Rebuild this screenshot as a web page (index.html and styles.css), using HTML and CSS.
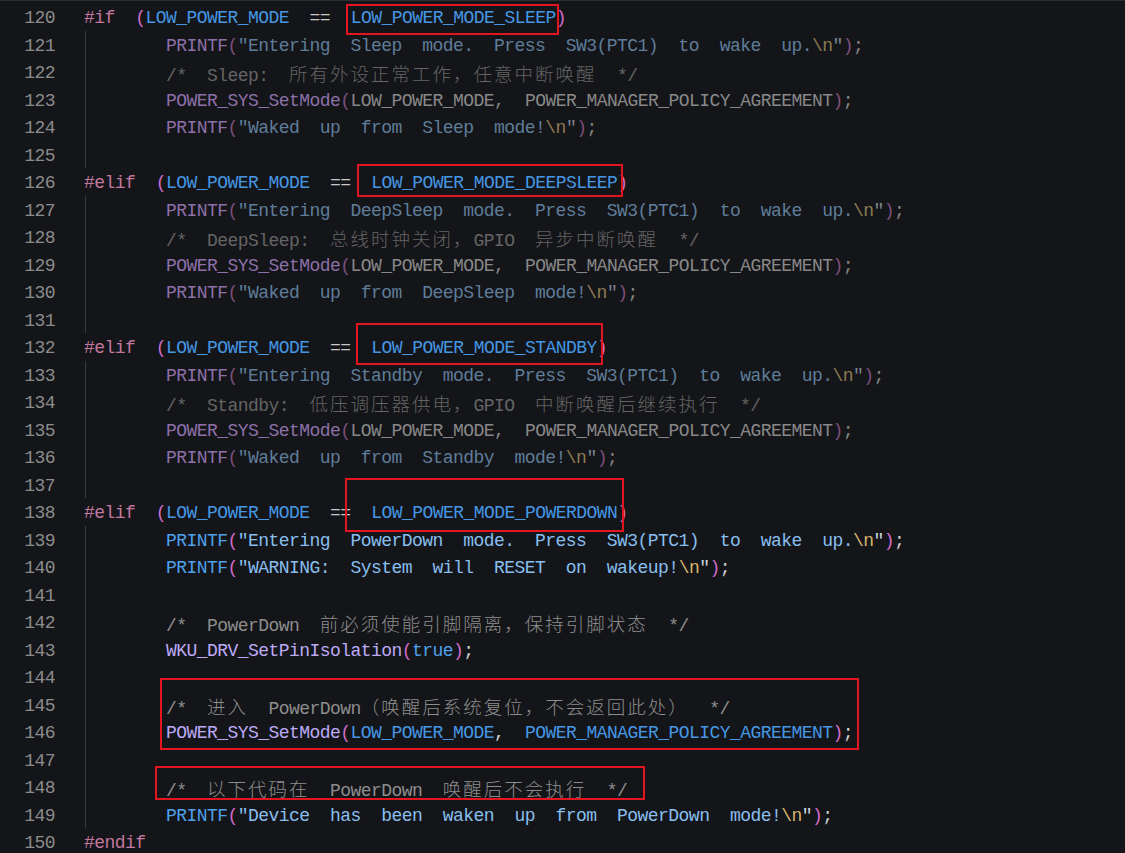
FILE: index.html
```html
<!DOCTYPE html>
<html lang="zh-CN">
<head>
<meta charset="utf-8">
<title>Code</title>
<link rel="stylesheet" href="styles.css">
</head>
<body>
<div class="editor">
<div class="ln"><span class="no">120</span><span class="code"><span class="k">#if</span>  <span class="p">(</span><span class="i">LOW_POWER_MODE</span>  <span class="o">==</span>  <span class="i">LOW_POWER_MODE_SLEEP</span><span class="p">)</span></span></div>
<div class="ln g dim"><span class="no">121</span><span class="code">        <span class="f">PRINTF</span><span class="p">(</span><span class="s">"Entering  Sleep  mode.  Press  SW3(PTC1)  to  wake  up.</span><span class="e">\n</span><span class="q">"</span><span class="p">)</span><span class="t">;</span></span></div>
<div class="ln g dim"><span class="no">122</span><span class="code">        <span class="c">/*  Sleep:  <span class="cj">所有外设正常工作，任意中断唤醒</span>  */</span></span></div>
<div class="ln g dim"><span class="no">123</span><span class="code">        <span class="f">POWER_SYS_SetMode</span><span class="p">(</span><span class="i">LOW_POWER_MODE</span><span class="t">,</span>  <span class="i">POWER_MANAGER_POLICY_AGREEMENT</span><span class="p">)</span><span class="t">;</span></span></div>
<div class="ln g dim"><span class="no">124</span><span class="code">        <span class="f">PRINTF</span><span class="p">(</span><span class="s">"Waked  up  from  Sleep  mode!</span><span class="e">\n</span><span class="q">"</span><span class="p">)</span><span class="t">;</span></span></div>
<div class="ln g"><span class="no">125</span><span class="code"> </span></div>
<div class="ln"><span class="no">126</span><span class="code"><span class="k">#elif</span>  <span class="p">(</span><span class="i">LOW_POWER_MODE</span>  <span class="o">==</span>  <span class="i">LOW_POWER_MODE_DEEPSLEEP</span><span class="p">)</span></span></div>
<div class="ln g dim"><span class="no">127</span><span class="code">        <span class="f">PRINTF</span><span class="p">(</span><span class="s">"Entering  DeepSleep  mode.  Press  SW3(PTC1)  to  wake  up.</span><span class="e">\n</span><span class="q">"</span><span class="p">)</span><span class="t">;</span></span></div>
<div class="ln g dim"><span class="no">128</span><span class="code">        <span class="c">/*  DeepSleep:  <span class="cj">总线时钟关闭，</span>GPIO  <span class="cj">异步中断唤醒</span>  */</span></span></div>
<div class="ln g dim"><span class="no">129</span><span class="code">        <span class="f">POWER_SYS_SetMode</span><span class="p">(</span><span class="i">LOW_POWER_MODE</span><span class="t">,</span>  <span class="i">POWER_MANAGER_POLICY_AGREEMENT</span><span class="p">)</span><span class="t">;</span></span></div>
<div class="ln g dim"><span class="no">130</span><span class="code">        <span class="f">PRINTF</span><span class="p">(</span><span class="s">"Waked  up  from  DeepSleep  mode!</span><span class="e">\n</span><span class="q">"</span><span class="p">)</span><span class="t">;</span></span></div>
<div class="ln g"><span class="no">131</span><span class="code"> </span></div>
<div class="ln"><span class="no">132</span><span class="code"><span class="k">#elif</span>  <span class="p">(</span><span class="i">LOW_POWER_MODE</span>  <span class="o">==</span>  <span class="i">LOW_POWER_MODE_STANDBY</span><span class="p">)</span></span></div>
<div class="ln g dim"><span class="no">133</span><span class="code">        <span class="f">PRINTF</span><span class="p">(</span><span class="s">"Entering  Standby  mode.  Press  SW3(PTC1)  to  wake  up.</span><span class="e">\n</span><span class="q">"</span><span class="p">)</span><span class="t">;</span></span></div>
<div class="ln g dim"><span class="no">134</span><span class="code">        <span class="c">/*  Standby:  <span class="cj">低压调压器供电，</span>GPIO  <span class="cj">中断唤醒后继续执行</span>  */</span></span></div>
<div class="ln g dim"><span class="no">135</span><span class="code">        <span class="f">POWER_SYS_SetMode</span><span class="p">(</span><span class="i">LOW_POWER_MODE</span><span class="t">,</span>  <span class="i">POWER_MANAGER_POLICY_AGREEMENT</span><span class="p">)</span><span class="t">;</span></span></div>
<div class="ln g dim"><span class="no">136</span><span class="code">        <span class="f">PRINTF</span><span class="p">(</span><span class="s">"Waked  up  from  Standby  mode!</span><span class="e">\n</span><span class="q">"</span><span class="p">)</span><span class="t">;</span></span></div>
<div class="ln g"><span class="no">137</span><span class="code"> </span></div>
<div class="ln"><span class="no">138</span><span class="code"><span class="k">#elif</span>  <span class="p">(</span><span class="i">LOW_POWER_MODE</span>  <span class="o">==</span>  <span class="i">LOW_POWER_MODE_POWERDOWN</span><span class="p">)</span></span></div>
<div class="ln g"><span class="no">139</span><span class="code">        <span class="m">PRINTF</span><span class="p">(</span><span class="s">"Entering  PowerDown  mode.  Press  SW3(PTC1)  to  wake  up.</span><span class="e">\n</span><span class="q">"</span><span class="p">)</span><span class="t">;</span></span></div>
<div class="ln g"><span class="no">140</span><span class="code">        <span class="m">PRINTF</span><span class="p">(</span><span class="s">"WARNING:  System  will  RESET  on  wakeup!</span><span class="e">\n</span><span class="q">"</span><span class="p">)</span><span class="t">;</span></span></div>
<div class="ln g"><span class="no">141</span><span class="code"> </span></div>
<div class="ln g"><span class="no">142</span><span class="code">        <span class="c">/*  PowerDown  <span class="cj">前必须使能引脚隔离，保持引脚状态</span>  */</span></span></div>
<div class="ln g"><span class="no">143</span><span class="code">        <span class="f">WKU_DRV_SetPinIsolation</span><span class="p">(</span><span class="m">true</span><span class="p">)</span><span class="t">;</span></span></div>
<div class="ln g"><span class="no">144</span><span class="code"> </span></div>
<div class="ln g"><span class="no">145</span><span class="code">        <span class="c">/*  <span class="cj">进入</span>  PowerDown<span class="cj">（唤醒后系统复位，不会返回此处）</span>  */</span></span></div>
<div class="ln g"><span class="no">146</span><span class="code">        <span class="f">POWER_SYS_SetMode</span><span class="p">(</span><span class="i">LOW_POWER_MODE</span><span class="t">,</span>  <span class="i">POWER_MANAGER_POLICY_AGREEMENT</span><span class="p">)</span><span class="t">;</span></span></div>
<div class="ln g"><span class="no">147</span><span class="code"> </span></div>
<div class="ln g"><span class="no">148</span><span class="code">        <span class="c">/*  <span class="cj">以下代码在</span>  PowerDown  <span class="cj">唤醒后不会执行</span>  */</span></span></div>
<div class="ln g"><span class="no">149</span><span class="code">        <span class="m">PRINTF</span><span class="p">(</span><span class="s">"Device  has  been  waken  up  from  PowerDown  mode!</span><span class="e">\n</span><span class="q">"</span><span class="p">)</span><span class="t">;</span></span></div>
<div class="ln"><span class="no">150</span><span class="code"><span class="k">#endif</span></span></div>

<div class="mark mark1"></div>
<div class="mark mark2"></div>
<div class="mark mark3"></div>
<div class="mark mark4"></div>
<div class="mark mark5"></div>
<div class="mark mark6"></div>
</div>
</body>
</html>
```

FILE: styles.css
```css
html, body {
  margin: 0;
  padding: 0;
  background: #141519;
}

.editor {
  position: relative;
  width: 1125px;
  height: 853px;
  box-sizing: border-box;
  border-top: 1px solid #2c2d31;
  padding-top: 4px;
  overflow: hidden;
  font-family: "Liberation Mono", "DejaVu Sans Mono", monospace;
  font-size: 18px;
  letter-spacing: -0.55px;
  color: #c8c8c8;
}

.ln {
  display: grid;
  grid-template-columns: 55px 1fr;
  column-gap: 29px;
  height: 27.5px;
  line-height: 27.5px;
}

.no {
  text-align: right;
  color: #8c8c8c;
}

.code {
  position: relative;
  white-space: pre;
}

.g .code::before {
  content: "";
  position: absolute;
  left: 1px;
  top: -2px;
  bottom: 2px;
  width: 1px;
  background: #393a3e;
}

.cj {
  font-family: "Noto Sans CJK SC", sans-serif;
  font-size: 18.5px;
  font-weight: 300;
  letter-spacing: 2px;
}

/* active tokens */
.k { color: #c2789f; }
.p { color: #d26cc8; }
.o { color: #c8c8c8; }
.i { color: #4597e3; }
.m { color: #4ea1ea; }
.f { color: #bcaaf6; }
.s { color: #88bfee; }
.q { color: #c9d3dc; }
.e { color: #d6b46c; }
.t { color: #d0d0d0; }
.c { color: #8d8d8d; }

/* inactive preprocessor region */
.dim .f { color: #8c70a8; }
.dim .p { color: #7c4f7a; }
.dim .s { color: #5f7d99; }
.dim .q { color: #7a8590; }
.dim .e { color: #8c7a52; }
.dim .t { color: #858585; }
.dim .i { color: #888888; }
.dim .c { color: #646464; }

/* review annotations */
.mark {
  position: absolute;
  border: 2px solid #e3161f;
  box-sizing: border-box;
}
.mark1 { left: 346px; top: 3px; width: 213px; height: 31px; }
.mark2 { left: 357px; top: 163px; width: 266px; height: 33px; }
.mark3 { left: 356px; top: 322px; width: 247px; height: 42px; }
.mark4 { left: 345px; top: 477px; width: 279px; height: 54px; }
.mark5 { left: 160px; top: 677px; width: 699px; height: 72px; }
.mark6 { left: 155px; top: 765px; width: 490px; height: 34px; }
```
